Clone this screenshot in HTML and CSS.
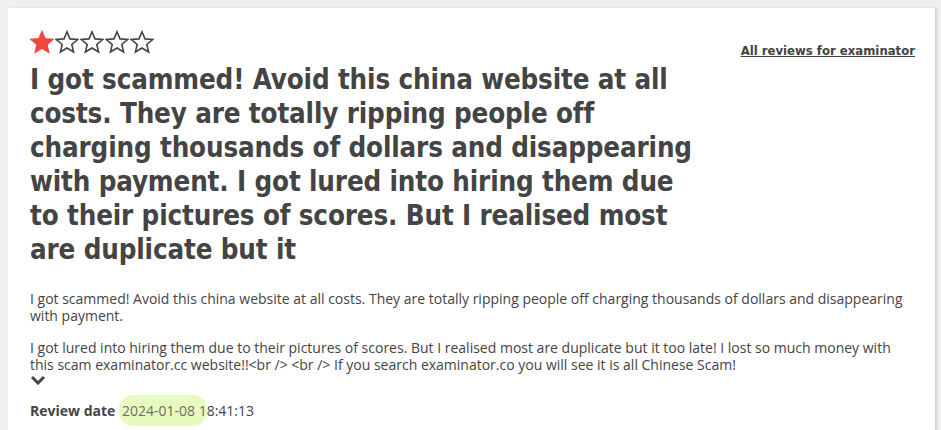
FILE: index.html
```html
<!DOCTYPE html>
<html lang="en">
<head>
  <meta charset="UTF-8" />
  <title>Review - examinator</title>
  <link rel="stylesheet" href="styles.css">
</head>
<body>
  <div class="review-card">
    <div class="review-head">
      <div class="review-main">
        <div class="stars">
          <svg class="star filled" viewBox="0 0 24 24"><path d="M12 1.8l3 7.1 7.7.6-5.9 5 1.8 7.5L12 18l-6.6 4 1.8-7.5-5.9-5 7.7-.6z"/></svg>
          <svg class="star" viewBox="0 0 24 24"><path d="M12 1.8l3 7.1 7.7.6-5.9 5 1.8 7.5L12 18l-6.6 4 1.8-7.5-5.9-5 7.7-.6z"/></svg>
          <svg class="star" viewBox="0 0 24 24"><path d="M12 1.8l3 7.1 7.7.6-5.9 5 1.8 7.5L12 18l-6.6 4 1.8-7.5-5.9-5 7.7-.6z"/></svg>
          <svg class="star" viewBox="0 0 24 24"><path d="M12 1.8l3 7.1 7.7.6-5.9 5 1.8 7.5L12 18l-6.6 4 1.8-7.5-5.9-5 7.7-.6z"/></svg>
          <svg class="star" viewBox="0 0 24 24"><path d="M12 1.8l3 7.1 7.7.6-5.9 5 1.8 7.5L12 18l-6.6 4 1.8-7.5-5.9-5 7.7-.6z"/></svg>
        </div>
        <h1 class="review-title">I got scammed! Avoid this china website at all costs. They are totally ripping people off charging thousands of dollars and disappearing with payment. I got lured into hiring them due to their pictures of scores. But I realised most are duplicate but it</h1>
      </div>
      <a class="all-reviews" href="#">All reviews for examinator</a>
    </div>

    <div class="review-body">
      <p>I got scammed! Avoid this china website at all costs. They are totally ripping people off charging thousands of dollars and disappearing with payment.</p>
      <p>I got lured into hiring them due to their pictures of scores. But I realised most are duplicate but it too late! I lost so much money with this scam examinator.cc website!!&lt;br /&gt; &lt;br /&gt; If you search examinator.co you will see it is all Chinese Scam!</p>
      <svg class="expand" viewBox="0 0 16 10"><path d="M2 2l6 6 6-6"/></svg>
    </div>

    <div class="review-date"><b>Review date</b> <mark>2024-01-08 1</mark>8:41:13</div>
  </div>
</body>
</html>
```

FILE: styles.css
```css
html, body {
  height: 100%;
  overflow: hidden;
}
body {
  margin: 0;
  padding: 8px 6px 0 8px;
  background-color: #efefef;
  font-family: 'Open Sans', sans-serif;
  color: #444;
}
.review-card {
  background-color: #fff;
  box-shadow: 2px 0 2px rgba(0, 0, 0, 0.12);
  padding: 22px 20px 12px 22px;
  min-height: 460px;
}
.review-head {
  display: flex;
  justify-content: space-between;
  align-items: flex-start;
}
.review-main {
  max-width: 676px;
}
.stars {
  display: flex;
  gap: 1px;
  height: 24px;
}
.star {
  width: 24px;
  height: 24px;
  fill: none;
  stroke: #444;
  stroke-width: 1.6;
  stroke-linejoin: miter;
}
.star.filled {
  fill: #f2473c;
  stroke: #f2473c;
}
.review-title {
  margin: 8px 0 0;
  font-family: 'DejaVu Sans Condensed', 'DejaVu Sans', sans-serif;
  font-size: 27.5px;
  letter-spacing: -0.15px;
  line-height: 34px;
  font-weight: bold;
  color: #444;
}
.all-reviews {
  margin-top: 13px;
  font-family: 'DejaVu Sans Condensed', 'DejaVu Sans', sans-serif;
  font-size: 13px;
  font-weight: bold;
  color: #444;
  text-decoration: underline;
}
.review-body {
  margin-top: 24px;
  font-size: 14px;
  line-height: 17px;
}
.review-body p {
  margin: 0 0 15px;
}
.expand {
  display: block;
  width: 16px;
  height: 10px;
  margin: -13px 0 0 0;
  fill: none;
  stroke: #444;
  stroke-width: 3;
}
.review-date {
  margin-top: 16px;
  font-size: 14px;
}
.review-date b {
  font-weight: bold;
}
.review-date mark {
  background-color: rgba(214, 245, 140, 0.55);
  color: #6b6e5e;
  padding: 6px 0 6px 3px;
  border-radius: 14px;
}
```
